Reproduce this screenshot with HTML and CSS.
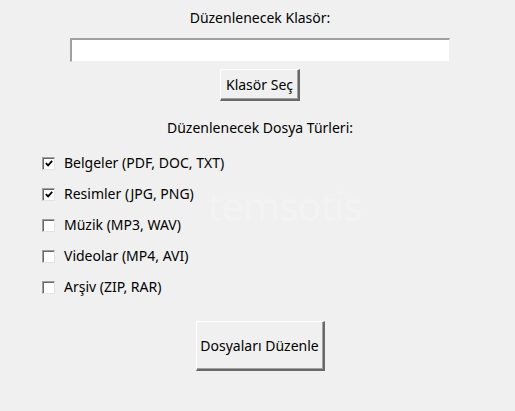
FILE: index.html
```html
<!DOCTYPE html>
<html lang="tr">
<head>
<meta charset="utf-8">
<title>Dosya Düzenleyici</title>
<link rel="stylesheet" href="styles.css">
</head>
<body>
<div class="window">
  <div class="top">
    <div class="label first">Düzenlenecek Klasör:</div>
    <div class="entry"></div>
    <button class="btn btn-small">Klasör Seç</button>
    <div class="label second">Düzenlenecek Dosya Türleri:</div>
  </div>
  <div class="checks">
    <label class="check"><span class="box"><svg viewBox="0 0 11 11" width="11" height="11"><path d="M2 5 L4.5 7.5 L9 2.5" fill="none" stroke="#000" stroke-width="2"/></svg></span>Belgeler (PDF, DOC, TXT)</label>
    <label class="check"><span class="box"><svg viewBox="0 0 11 11" width="11" height="11"><path d="M2 5 L4.5 7.5 L9 2.5" fill="none" stroke="#000" stroke-width="2"/></svg></span>Resimler (JPG, PNG)</label>
    <label class="check"><span class="box"></span>Müzik (MP3, WAV)</label>
    <label class="check"><span class="box"></span>Videolar (MP4, AVI)</label>
    <label class="check"><span class="box"></span>Arşiv (ZIP, RAR)</label>
  </div>
  <div class="bottom">
    <button class="btn btn-big">Dosyaları Düzenle</button>
  </div>
  <div class="watermark">temsotis</div>
</div>
</body>
</html>
```
FILE: styles.css
```css
html, body {
  margin: 0;
  padding: 0;
  background: #f0f0f0;
}
body {
  font-family: "Noto Sans", "Open Sans", sans-serif;
  font-size: 14px;
  color: #000;
  width: 515px;
  height: 411px;
  overflow: hidden;
}
.window {
  position: relative;
  height: 411px;
  padding-left: 5px;
  box-sizing: border-box;
}
.top {
  display: flex;
  flex-direction: column;
  align-items: center;
}
.label {
  line-height: 16px;
  height: 16px;
}
.label.first {
  margin-top: 10px;
}
.entry {
  margin-top: 12px;
  width: 380px;
  height: 24px;
  box-sizing: border-box;
  background: #fff;
  border-top: 2px solid #a0a0a0;
  border-left: 2px solid #a0a0a0;
  border-right: 1px solid #f0f0f0;
  border-bottom: 1px solid #f0f0f0;
}
.btn {
  font-family: inherit;
  font-size: 14px;
  color: #000;
  background: #f0f0f0;
  border-style: solid;
  border-width: 1px 2px 2px 1px;
  border-color: #ffffff #696969 #696969 #ffffff;
  box-shadow: inset -1px -1px 0 #a0a0a0;
  padding: 0;
  margin: 0;
  box-sizing: border-box;
}
.btn-small {
  margin-top: 7px;
  width: 80px;
  height: 32px;
}
.label.second {
  margin-top: 19px;
}
.checks {
  display: flex;
  flex-direction: column;
  gap: 15px;
  padding-left: 37px;
  margin-top: 19px;
}
.check {
  display: flex;
  align-items: center;
  gap: 9px;
  height: 16px;
  line-height: 16px;
}
.box {
  width: 13px;
  height: 13px;
  box-sizing: border-box;
  background: #fff;
  border-style: solid;
  border-width: 1px;
  border-color: #a0a0a0 #e3e3e3 #e3e3e3 #a0a0a0;
  box-shadow: inset 1px 1px 0 #696969;
  display: flex;
  align-items: center;
  justify-content: center;
}
.box svg {
  display: block;
  margin: 1px 0 0 1px;
}
.bottom {
  display: flex;
  justify-content: center;
  margin-top: 26px;
}
.btn-big {
  width: 129px;
  height: 50px;
}
.watermark {
  position: absolute;
  left: 208px;
  top: 178px;
  font-family: "Noto Sans", sans-serif;
  font-size: 40px;
  color: #f3f3f3;
  letter-spacing: -1px;
  pointer-events: none;
}
```
